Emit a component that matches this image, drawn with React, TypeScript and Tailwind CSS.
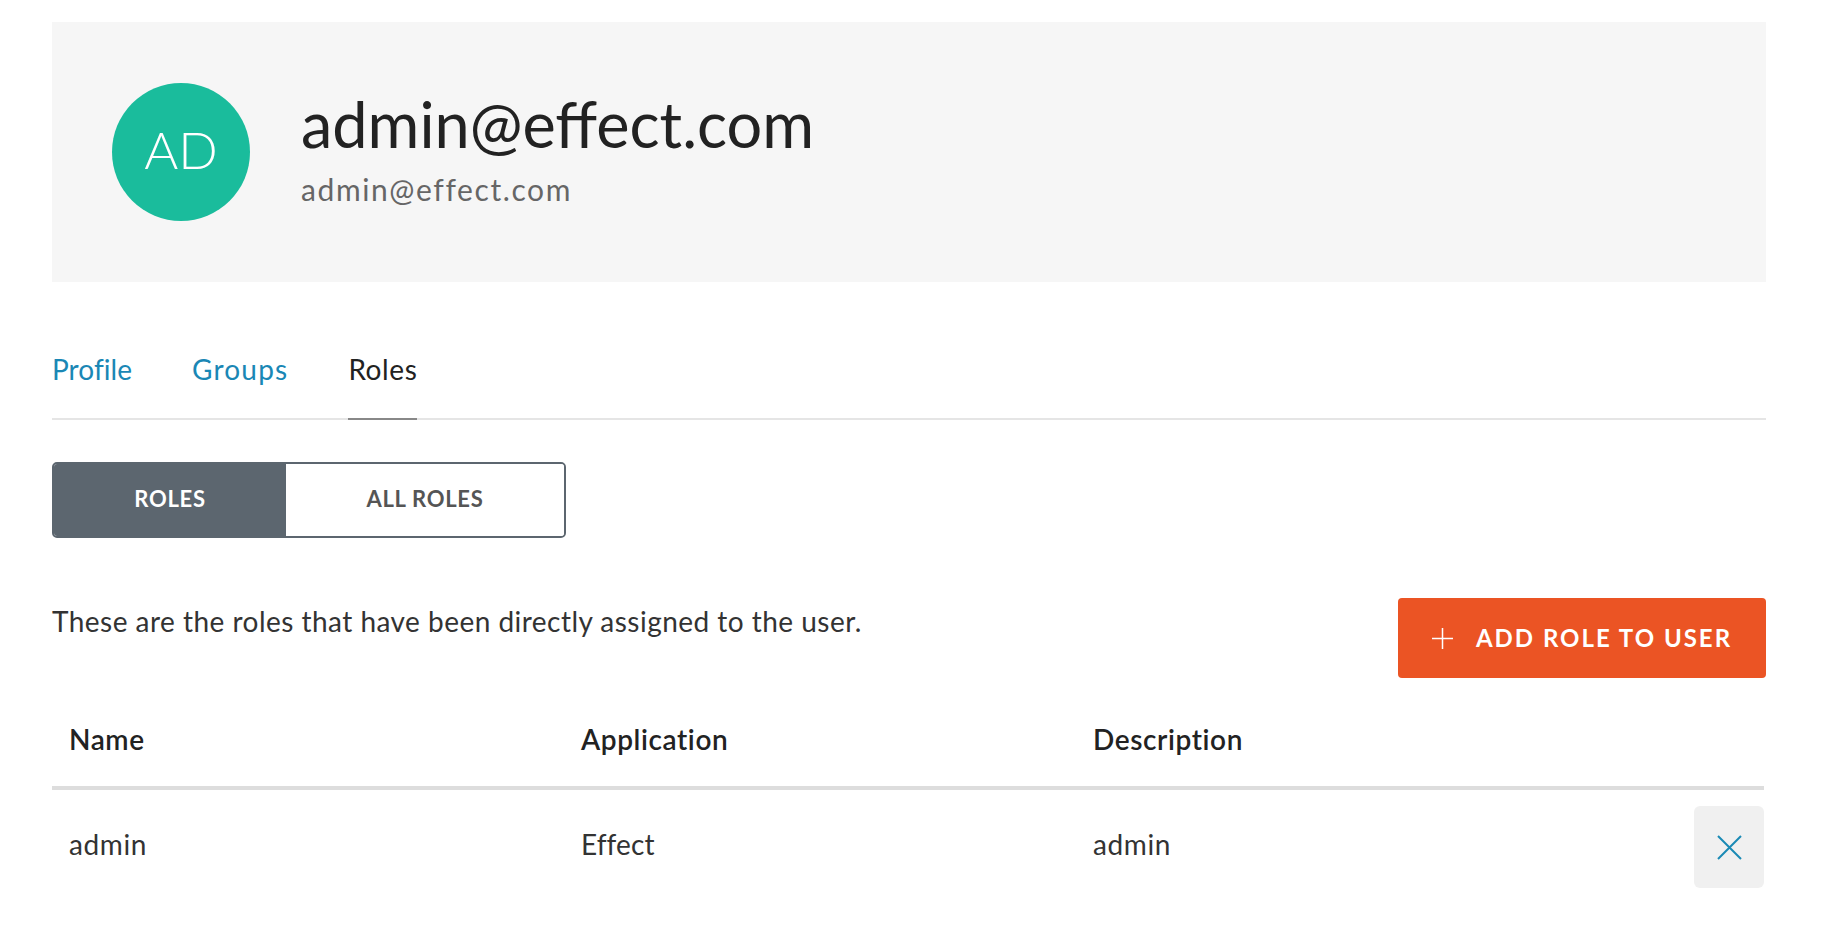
import React from "react";

const font = { fontFamily: "Lato, 'Open Sans', sans-serif" };

export default function App() {
  return (
    <div className="min-h-[952px] bg-white text-[#333]" style={font}>
      <div className="ml-[52px] w-[1714px] pt-[22px]">
        {/* Header */}
        <div className="flex h-[260px] items-center bg-[#f6f6f6] px-[60px]">
          <div className="flex h-[138px] w-[138px] shrink-0 items-center justify-center rounded-full bg-[#1abc9c]">
            <span className="mb-[6px] text-[52px] font-light leading-none text-white">AD</span>
          </div>
          <div className="mb-[7px] ml-[51px] flex flex-col">
            <div className="text-[63px] font-normal leading-[72px] text-[#222]">admin@effect.com</div>
            <div className="mt-[9px] text-[30px] leading-[40px] tracking-[1.6px] text-[#666]">admin@effect.com</div>
          </div>
        </div>

        {/* Tabs */}
        <div className="mt-[69px] flex gap-[60px] border-b-2 border-[#e5e5e5]">
          <div className="-mb-[2px] pb-[31px] text-[28px] leading-[36px] tracking-[0.05px] text-[#1a87b5]">Profile</div>
          <div className="-mb-[2px] pb-[31px] text-[28px] leading-[36px] tracking-[1.2px] text-[#1a87b5]">Groups</div>
          <div className="-mb-[2px] border-b-2 border-[#888] pb-[31px] text-[28px] leading-[36px] tracking-[0.6px] text-[#222]">Roles</div>
        </div>

        {/* Toggle */}
        <div className="mt-[42px] flex h-[76px] w-[514px] overflow-hidden rounded-[5px] border-2 border-[#5c666f]">
          <div className="flex w-[232px] items-center justify-center bg-[#5c666f] pb-[4px] text-[22px] font-bold tracking-[0.7px] text-white">ROLES</div>
          <div className="flex flex-1 items-center justify-center bg-white pb-[4px] text-[22px] font-bold tracking-[0.7px] text-[#555]">ALL ROLES</div>
        </div>

        {/* Description + button */}
        <div className="mt-[60px] flex items-start justify-between">
          <p className="mt-[5px] text-[28px] leading-[36px] tracking-[0.47px] text-[#333]">
            These are the roles that have been directly assigned to the user.
          </p>
          <button className="flex h-[80px] w-[368px] items-center justify-center gap-[23px] rounded-[4px] bg-[#eb5424] text-[24px] font-bold tracking-[2px] text-white">
            <svg width="21" height="21" viewBox="0 0 21 21" fill="none" stroke="white" strokeWidth="1.5">
              <path d="M10.5 0v21M0 10.5h21" />
            </svg>
            ADD ROLE TO USER
          </button>
        </div>

        {/* Table */}
        <div className="mt-[22px] w-[1712px]">
          <div className="flex h-[90px] items-center border-b-4 border-[#ddd] pb-[8px] text-[28px] font-semibold tracking-[0.6px] text-[#222]">
            <div className="w-[512px] pl-[17px]">Name</div>
            <div className="w-[512px] pl-[17px]">Application</div>
            <div className="w-[512px] pl-[17px]">Description</div>
            <div className="flex-1" />
          </div>
          <div className="flex items-center py-[16px] text-[28px] tracking-[0.6px] text-[#333]">
            <div className="w-[512px] pb-[6px] pl-[17px]">admin</div>
            <div className="w-[512px] pb-[6px] pl-[17px] tracking-[0.1px]">Effect</div>
            <div className="w-[512px] pb-[6px] pl-[17px]">admin</div>
            <div className="flex flex-1 justify-end">
              <button className="flex h-[82px] w-[70px] items-center justify-center rounded-[6px] bg-[#f0f0f0]">
                <svg width="25" height="25" viewBox="0 0 25 25" fill="none" stroke="#1a8ab5" strokeWidth="2">
                  <path d="M1 1l23 23M24 1L1 24" />
                </svg>
              </button>
            </div>
          </div>
        </div>
      </div>
    </div>
  );
}
